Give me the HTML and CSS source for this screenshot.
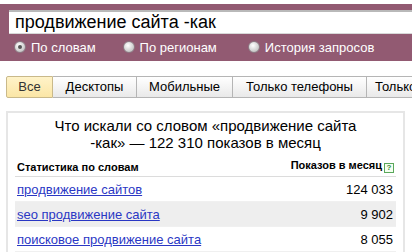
FILE: index.html
```html
<!DOCTYPE html>
<html lang="ru">
<head>
<meta charset="utf-8">
<link rel="stylesheet" href="styles.css">
</head>
<body>
<div class="header">
  <div class="search">продвижение сайта -как</div>
  <div class="radios">
    <label class="radio"><span class="dot on"></span>По словам</label>
    <label class="radio"><span class="dot"></span>По регионам</label>
    <label class="radio"><span class="dot"></span>История запросов</label>
  </div>
</div>
<div class="tabs">
  <span class="tab active">Все</span>
  <span class="tab">Десктопы</span>
  <span class="tab">Мобильные</span>
  <span class="tab">Только телефоны</span>
  <span class="tab">Только планшеты</span>
</div>
<div class="panel">
  <div class="title">Что искали со словом «продвижение сайта -как» — 122 310 показов в месяц</div>
  <table class="stats">
    <thead>
      <tr><th class="left">Статистика по словам</th><th class="right">Показов в месяц<span class="help">?</span></th></tr>
    </thead>
    <tbody>
      <tr><td><a href="#">продвижение сайтов</a></td><td class="num">124 033</td></tr>
      <tr class="odd"><td><a href="#">seo продвижение сайта</a></td><td class="num">9 902</td></tr>
      <tr><td><a href="#">поисковое продвижение сайта</a></td><td class="num">8 055</td></tr>
    </tbody>
  </table>
</div>
</body>
</html>
```
FILE: styles.css
```css
html, body {
  margin: 0;
  padding: 0;
  background: #fff;
  font-family: "Liberation Sans", Arial, sans-serif;
  overflow: hidden;
}
.header {
  margin-top: 4px;
  background: #925a72;
  padding: 6px 0 5px 9px;
  overflow: hidden;
}
.search {
  box-sizing: border-box;
  height: 24px;
  width: 420px;
  background: #fff;
  border-top: 2px solid #b9b9b9;
  border-bottom: 1px solid #d8d8d8;
  font-size: 18px;
  line-height: 21px;
  padding-left: 6px;
  color: #000;
  white-space: nowrap;
}
.radios {
  display: flex;
  height: 18px;
  margin-top: 4px;
  align-items: center;
}
.radio {
  display: flex;
  align-items: center;
  color: #fff;
  font-size: 13px;
  margin-left: 5px;
}
.radio:nth-child(2) { margin-left: 27px; }
.radio:nth-child(3) { margin-left: 31px; }
.dot {
  width: 10px;
  height: 10px;
  border-radius: 50%;
  background: radial-gradient(circle at 40% 35%, #ffffff, #c8c8c8 70%, #a8a8a8);
  border: 1px solid #8d7a84;
  margin-right: 5px;
  position: relative;
}
.dot.on::after {
  content: "";
  position: absolute;
  left: 3px;
  top: 3px;
  width: 4px;
  height: 4px;
  border-radius: 50%;
  background: #555;
}
.tabs {
  display: flex;
  margin: 15px 0 0 6px;
  white-space: nowrap;
  overflow: hidden;
}
.tab {
  box-sizing: border-box;
  height: 22px;
  line-height: 20px;
  font-size: 13px;
  color: #000;
  border: 1px solid #b5b5b5;
  border-left: none;
  background: linear-gradient(#ffffff, #e9e9e9);
  padding: 0 13px;
  flex: none;
}
.tab:first-child {
  border-left: 1px solid #b5b5b5;
  border-radius: 2px 0 0 2px;
}
.tab.active {
  background: linear-gradient(#fff3c9, #fbe6a6);
  color: #333;
  border-color: #c9b98a;
  width: 47px;
  text-align: center;
  padding: 0;
}
.tab:nth-child(2) { width: 84px; text-align: center; padding: 0; }
.tab:nth-child(3) { width: 96px; text-align: center; padding: 0; }
.tab:nth-child(4) { width: 134px; text-align: center; padding: 0; }
.tab:nth-child(5) { padding-left: 8px; }
.panel {
  margin: 13px 7px 0 6px;
  border: 2px solid #e6e6e6;
  border-bottom: none;
  padding: 4px 7px 0 7px;
  height: 139px;
  overflow: hidden;
}
.title {
  text-align: center;
  font-size: 15px;
  line-height: 17px;
  color: #000;
  padding: 0 32px;
}
.stats {
  width: 100%;
  border-collapse: collapse;
  margin-top: 4px;
  font-size: 13px;
}
.stats th {
  font-size: 11px;
  font-weight: bold;
  color: #000;
  height: 18px;
  vertical-align: bottom;
  padding: 0 2px 3px 2px;
  border-bottom: 1px solid #dcdcdc;
}
.stats th.left { text-align: left; }
.stats th.right { text-align: right; white-space: nowrap; }
.help {
  display: inline-block;
  box-sizing: border-box;
  width: 10px;
  height: 10px;
  border: 1px solid #5aa85a;
  color: #3a8a3a;
  font-size: 8px;
  line-height: 8px;
  text-align: center;
  margin-left: 2px;
  vertical-align: -1px;
  background: #f4fff0;
}
.stats td {
  height: 24px;
  padding: 0 3px 0 2px;
  border-bottom: 1px solid #f0f0f0;
}
.stats tr.odd td { background: #eeeeee; }
.stats a {
  color: #2a37c4;
  text-decoration: underline;
}
.stats td.num {
  text-align: right;
  color: #000;
}
```
